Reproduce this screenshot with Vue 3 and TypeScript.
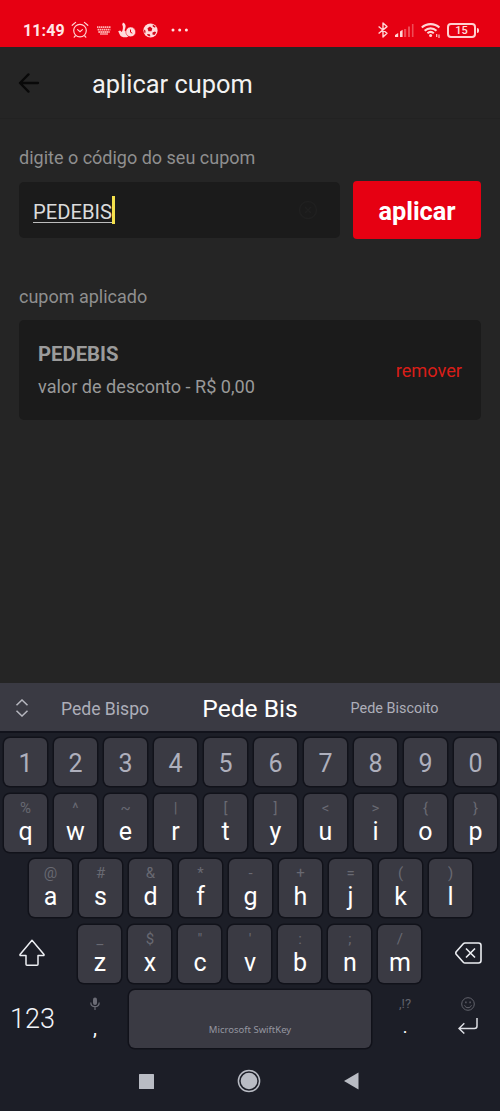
<script setup lang="ts">
interface Key {
  label: string
  hint: string
}

function toKeys(labels: string, hints: string[]): Key[] {
  return labels.split('').map((label, i) => ({ label, hint: hints[i] }))
}

const numbers: string[] = '1234567890'.split('')
const topRow = toKeys('qwertyuiop', ['%', '^', '~', '|', '[', ']', '<', '>', '{', '}'])
const homeRow = toKeys('asdfghjkl', ['@', '#', '&', '*', '-', '+', '=', '(', ')'])
const bottomRow = toKeys('zxcvbnm', ['_', '$', '"', "'", ':', ';', '/'])
const coupon = 'PEDEBIS'
</script>

<template>
  <div class="screen">
    <header class="status">
      <span class="clock">11:49</span>
      <svg class="st-alarm" width="18" height="18" viewBox="0 0 18 18" fill="none" stroke="#ffd3d3" stroke-width="1.2" stroke-linecap="round">
        <circle cx="9" cy="9.6" r="6.3" />
        <path d="M1.2 4.3 4.6 1.4M16.8 4.3l-3.4-2.9M6.6 8.6 9 10.6l2.4-2M4.2 15l-1 1.2M13.8 15l1 1.2" />
      </svg>
      <svg class="st-kbd" width="14" height="9" viewBox="0 0 14 9" fill="none" stroke="#ffb4b4" stroke-width="1.8">
        <path d="M0 1.2h14M.6 3.6h12.8M1.4 6h11.2" stroke-dasharray="1.5 .5" />
        <path d="M3 8h8" stroke-width="1.3" />
      </svg>
      <svg class="st-touch" width="18" height="16" viewBox="0 0 18 16">
        <path d="M5 .5C7.600 1.600 8.200 3.800 7.200 6.500l-.7 2C7.500 8.500 8.300 9.400 8.500 11c.3 1.500 1 2.600 2 3.400C7.500 16 3.800 15.500 2.100 13.200L.2 9.300l1.900-.9 1.700 1.700C5 8 5.500 4.400 4.200 2.500z" fill="#ffdcdc" />
        <circle cx="12.700" cy="9.900" r="4.900" fill="#ffdcdc" stroke="#e60012" stroke-width=".5" />
        <path d="M12.500 7.500v2.700l1.800 1" fill="none" stroke="#e60012" stroke-width="1" />
      </svg>
      <svg class="st-ball" width="15" height="15" viewBox="0 0 15 15">
        <circle cx="7.500" cy="7.500" r="7.100" fill="#ffdcdc" />
        <path d="M4.500 5.200 7 3.600l2.300 2-.8 2.600-3.100.1zM9.800 1.500l2.800 2-.6 1.300-2.300-1.200zM1 6.500l1.600 1.300-.3 2.600-1-.9zM9.500 9.400l2.500-1 1.200 1-1.700 2.500-2-.3zM4.400 11l2.400.3.600 2-1.500-.1-1.800-1.100z" fill="#d10a1b" />
      </svg>
      <svg class="st-dots" width="18" height="4" viewBox="0 0 18 4" fill="#ffe2e2">
        <circle cx="2" cy="2" r="1.500" /><circle cx="8.700" cy="2" r="1.500" /><circle cx="15.400" cy="2" r="1.500" />
      </svg>
      <span class="grow"></span>
      <svg class="st-bt" width="10" height="16" viewBox="0 0 10 16" fill="none" stroke="#ffd6d6" stroke-width="1.400" stroke-linejoin="round">
        <path d="M.6 4.500 9 11.300 5 15V1l4 3.600L.6 11.500" />
      </svg>
      <svg class="st-signal" width="20" height="14" viewBox="0 0 20 14" fill="#ffd6d6">
        <path d="M0 12l3.200-2v4H0zM5 8.500l2.600-1.700V14H5z" />
        <path d="M9 6h2.200v8H9zM13 3.500h2V14h-2zM16.900 1h1.600v13h-1.600z" opacity=".35" />
      </svg>
      <svg class="st-wifi" width="20" height="17" viewBox="0 0 20 17" fill="none" stroke="#ffd6d6" stroke-width="2.100">
        <path d="M.8 5.600a13 13 0 0 1 17.600 0M3.700 8.700a8.600 8.600 0 0 1 11.800 0M6.400 11.200a5 5 0 0 1 6.400 0" />
        <circle cx="9.600" cy="13.600" r="1.500" fill="#ffd6d6" stroke="none" />
        <path d="M15.700 12v3M18 12.500V16" stroke-width="1.100" />
      </svg>
      <div class="battery"><span>15</span></div>
    </header>

    <nav class="appbar">
      <svg width="22" height="20" viewBox="0 0 22 20" fill="none" stroke="#090909" stroke-width="2.300" stroke-linecap="round" stroke-linejoin="round">
        <path d="M20 10H2M10.500 1.400 2 10l8.500 8.600" />
      </svg>
      <h1>aplicar cupom</h1>
    </nav>

    <main class="content">
      <div class="label">digite o código do seu cupom</div>
      <div class="form">
        <div class="field">
          <span class="typed">{{ coupon }}</span><i class="caret"></i>
          <svg class="clear" width="20" height="20" viewBox="0 0 20 20" fill="none" stroke="#202020" stroke-width="1.500">
            <circle cx="10" cy="10" r="8.500" /><path d="M7 7l6 6M13 7l-6 6" />
          </svg>
        </div>
        <button class="apply">aplicar</button>
      </div>
      <div class="label applied">cupom aplicado</div>
      <section class="card">
        <div>
          <div class="code">{{ coupon }}</div>
          <div class="discount">valor de desconto - R$ 0,00</div>
        </div>
        <a class="remove">remover</a>
      </section>
    </main>

    <section class="keyboard">
      <div class="suggestions">
        <svg class="expand" width="14" height="18" viewBox="0 0 14 18" fill="none" stroke="#b6b7bf" stroke-width="1.500">
          <path d="M1.500 6.300 7 1l5.500 5.300M1.500 11.700 7 17l5.500-5.300" />
        </svg>
        <span class="sug left">Pede Bispo</span>
        <span class="sug main">Pede Bis</span>
        <span class="sug right">Pede Biscoito</span>
      </div>

      <div class="row numbers">
        <div v-for="n in numbers" :key="n" class="key num">{{ n }}</div>
      </div>
      <div class="row">
        <div v-for="k in topRow" :key="k.label" class="key">
          <span class="hint">{{ k.hint }}</span><span class="letter">{{ k.label }}</span>
        </div>
      </div>
      <div class="row home">
        <div v-for="k in homeRow" :key="k.label" class="key">
          <span class="hint">{{ k.hint }}</span><span class="letter">{{ k.label }}</span>
        </div>
      </div>
      <div class="row">
        <div class="shift">
          <svg width="26" height="28" viewBox="0 0 26 28" fill="none" stroke="#eceef2" stroke-width="1.500" stroke-linejoin="round">
            <path d="M13 1.200 25 15.500q.3 1-.7 1H19v8.700q0 1-1 1H8q-1 0-1-1v-8.700H1.700q-1 0-.7-1z" />
          </svg>
        </div>
        <div v-for="k in bottomRow" :key="k.label" class="key">
          <span class="hint">{{ k.hint }}</span><span class="letter">{{ k.label }}</span>
        </div>
        <div class="backspace">
          <svg width="27" height="22" viewBox="0 0 27 22" fill="none" stroke="#eceef2" stroke-width="1.600" stroke-linejoin="round">
            <path d="M10 1h13.500q2.500 0 2.500 2.500v15q0 2.500-2.500 2.500H10q-1 0-1.700-.8L1.200 12.200q-.8-1.200 0-2.400L8.300 1.800Q9 1 10 1z" />
            <path d="M11 6.500l9 9M20 6.500l-9 9" />
          </svg>
        </div>
      </div>
      <div class="row last">
        <div class="symbols">123</div>
        <div class="comma">
          <svg width="10" height="13" viewBox="0 0 10 13" fill="none" stroke="#6b6c75" stroke-width="1.200">
            <rect x="3" y=".5" width="4" height="7.500" rx="2" fill="#6b6c75" stroke="none" />
            <path d="M.8 5.500c0 5.600 8.400 5.600 8.400 0M5 9.700V13" />
          </svg>
          <span>,</span>
        </div>
        <div class="space">Microsoft SwiftKey</div>
        <div class="period"><small>,!?</small><span>.</span></div>
        <div class="enter">
          <svg width="14" height="14" viewBox="0 0 14 14" fill="none" stroke="#62636c" stroke-width="1">
            <circle cx="7" cy="7" r="6.300" /><path d="M3.600 8.300c.8 3.200 6 3.200 6.800 0" />
            <path d="M4.900 4.500v1.800M9.100 4.500v1.800" stroke-width="1.300" />
          </svg>
          <svg class="return" width="20" height="16" viewBox="0 0 20 16" fill="none" stroke="#dcdee3" stroke-width="1.500">
            <path d="M19 0v8q0 2.500-2.500 2.500H1M6.300 5.200 1 10.500l5.300 5" />
          </svg>
        </div>
      </div>

      <footer class="system">
        <svg width="15" height="15" viewBox="0 0 15 15"><rect width="15" height="15" rx=".5" fill="#b9bcc4" /></svg>
        <svg width="24" height="24" viewBox="0 0 24 24">
          <circle cx="12" cy="12" r="10.600" fill="none" stroke="#b9bcc4" stroke-width="1.500" />
          <circle cx="12" cy="12" r="8.300" fill="#b9bcc4" />
        </svg>
        <svg width="15" height="18" viewBox="0 0 15 18"><path d="M14.500.5v17L0 9z" fill="#b9bcc4" /></svg>
      </footer>
    </section>
  </div>
</template>

<style>
body {
  margin: 0;
  background: #252525;
}
</style>

<style scoped>
.screen {
  width: 500px;
  height: 1111px;
  display: flex;
  flex-direction: column;
  overflow: hidden;
  background: #252525;
  font-family: Roboto, "Liberation Sans", sans-serif;
}
.screen * {
  box-sizing: border-box;
}
svg {
  display: block;
  flex: none;
}
.status {
  height: 47px;
  flex: none;
  display: flex;
  align-items: center;
  padding: 13px 20px 0 23px;
  background: #e60012;
}
.clock {
  width: 42px;
  font-size: 16px;
  font-weight: 700;
  letter-spacing: 0.1px;
  color: #ffe6e6;
}
.st-alarm { margin-left: 6px; }
.st-kbd { margin-left: 8px; }
.st-touch { margin-left: 7px; }
.st-ball { margin-left: 7px; }
.st-dots { margin-left: 13px; }
.grow { flex: 1; }
.st-signal { margin-left: 7px; }
.st-wifi { margin-left: 6px; }
.battery {
  position: relative;
  width: 29px;
  height: 15px;
  margin: 0 4px 0 6px;
  border: 2px solid #ffd0d0;
  border-radius: 4px;
  color: #ffe0e0;
  font-size: 11px;
  font-weight: 500;
  line-height: 12px;
  text-align: center;
}
.battery::after {
  content: "";
  position: absolute;
  right: -5px;
  top: 3px;
  width: 2px;
  height: 5px;
  border-radius: 0 2px 2px 0;
  background: #ffd6d6;
}
.appbar {
  height: 72px;
  flex: none;
  display: flex;
  align-items: center;
  padding: 0 0 0 18px;
  border-bottom: 1px solid #222;
}
.appbar h1 {
  margin: 3px 0 0 52px;
  font-size: 25.400px;
  font-weight: 400;
  line-height: 32px;
  color: #f2f2f2;
}
.content {
  flex: 1;
  padding: 28px 19px 0;
}
.label {
  height: 22px;
  line-height: 22px;
  font-size: 18px;
  color: #8f8f8f;
}
.form {
  display: flex;
  align-items: center;
  justify-content: space-between;
  margin-top: 12px;
  height: 58px;
}
.field {
  width: 321px;
  height: 56px;
  display: flex;
  align-items: center;
  padding: 0 22px 0 14px;
  border-radius: 5px;
  background: #1b1b1b;
}
.typed {
  height: 23px;
  margin-top: 2px;
  line-height: 24px;
  font-size: 20.200px;
  color: #dcdcdc;
  border-bottom: 1px solid #bdbdbd;
}
.caret {
  width: 3px;
  height: 28px;
  margin: -1px 0 0 -0.500px;
  background: #f4e04c;
}
.clear { margin-left: auto; }
.apply {
  width: 128px;
  height: 58px;
  padding: 3px 0 0;
  border: 0;
  border-radius: 4px;
  background: #e60012;
  color: #fff;
  font-family: inherit;
  font-size: 25.300px;
  font-weight: 700;
}
.applied { margin-top: 47px; }
.card {
  height: 100px;
  margin-top: 12px;
  padding: 0 19px;
  display: flex;
  align-items: center;
  justify-content: space-between;
  border-radius: 5px;
  background: #1b1b1b;
}
.code {
  font-size: 20.300px;
  font-weight: 700;
  line-height: 32px;
  color: #9b9b9b;
}
.discount {
  font-size: 18.100px;
  line-height: 32px;
  margin-top: 1px;
  margin-bottom: -1px;
  color: #999;
}
.remove {
  font-size: 18.200px;
  color: #d91e18;
}
.keyboard {
  height: 428px;
  flex: none;
  background: #1c1e27;
}
.suggestions {
  height: 50px;
  display: grid;
  grid-template-columns: 15px 14px 14px 124px 166px 123px;
  align-items: center;
  background: #3a3a43;
  border-bottom: 2px solid #11121b;
}
.expand { grid-column: 2; margin-top: 1px; }
.sug { text-align: center; white-space: nowrap; margin-top: 2px; }
.left { grid-column: 4; margin-top: 3px; font-size: 17.600px; color: #adaeb9; }
.main { grid-column: 5; font-size: 24.600px; color: #fff; }
.right { grid-column: 6; font-size: 14.400px; margin-top: 3px; color: #adaeb9; }
.row {
  display: flex;
  gap: 7px;
  height: 58px;
  margin: 7.500px 0 0 4px;
}
.numbers { height: 48px; margin-top: 5px; }
.home { margin-left: 29px; }
.key {
  width: 43px;
  flex: none;
  display: flex;
  flex-direction: column;
  align-items: center;
  padding-top: 2px;
  border-radius: 6px;
  background: #3a3a43;
  box-shadow: 0 0 0 1.500px #11121a;
}
.num {
  justify-content: center;
  padding: 2px 0 0;
  font-size: 25px;
  color: #aeafbc;
}
.hint {
  height: 24px;
  line-height: 24px;
  font-size: 15px;
  color: #686972;
}
.letter {
  height: 24px;
  line-height: 24px;
  font-size: 25px;
  color: #fff;
}
.shift {
  width: 68px;
  padding: 14px 0 0 15px;
}
.backspace {
  width: 72px;
  padding: 17px 0 0 27px;
}
.last { gap: 0; margin-left: 0; }
.symbols {
  width: 79px;
  padding-left: 10px;
  line-height: 58px;
  font-size: 27px;
  font-weight: 300;
  color: #f2f4f8;
}
.comma,
.period {
  display: flex;
  flex-direction: column;
  align-items: center;
  color: #fff;
  font-size: 20px;
}
.comma { width: 50px; padding: 7px 18px 0 0; }
.comma span { line-height: 24px; }
.comma svg { margin-bottom: 6px; }
.space {
  width: 242px;
  border-radius: 6px;
  background: #3a3a43;
  box-shadow: 0 0 0 1.500px #11121a;
  color: #9596a0;
  font-family: "Noto Sans", sans-serif;
  font-size: 9.500px;
  line-height: 80px;
  text-align: center;
}
.period { width: 68px; padding-top: 2px; }
.period small { height: 24px; line-height: 24px; font-size: 13px; color: #62636c; }
.period span { line-height: 22px; font-size: 18px; }
.enter { width: 57px; padding: 7px 0 0 22px; }
.return { margin: 7px 0 0 -3px; }
.system {
  height: 65px;
  display: flex;
  align-items: center;
  justify-content: space-between;
  padding: 1px 141px 0 139px;
}
</style>
